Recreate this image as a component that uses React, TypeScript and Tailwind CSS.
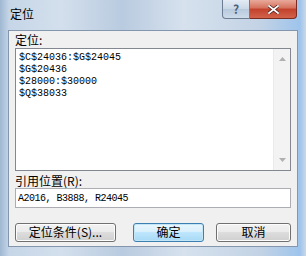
import { useState } from 'react';

const refs = ['$C$24036:$G$24045', '$G$20436', '$28000:$30000', '$Q$38033'];

function Win7Button({ label, primary }: { label: string; primary?: boolean }) {
    return (
        <button
            className={
                'w-full h-[19px] rounded-[3px] border text-[12px] leading-none text-black ' +
                (primary
                    ? 'border-[#3c7fb1] bg-[linear-gradient(#eaf6fd_0%,#d9f0fc_45%,#bee6fd_50%,#a7d9f5_100%)] shadow-[inset_0_0_0_1px_#c4e5f6]'
                    : 'border-[#707070] bg-[linear-gradient(#f2f2f2_0%,#ebebeb_45%,#dddddd_50%,#cfcfcf_100%)] shadow-[inset_0_0_0_1px_#fcfcfc]')
            }
        >
            {label}
        </button>
    );
}

export default function App() {
    const [value, setValue] = useState('A2016, B3888, R24045');

    return (
        <div
            className="w-[306px] h-[256px] flex flex-col overflow-hidden bg-[linear-gradient(90deg,#9fb7d2_0%,#c6d6e8_3%,#d3dfec_20%,#b9cbe0_40%,#d6e1ed_60%,#c3d3e5_85%,#9ec4ec_98%,#c9d8e8_100%)]"
            style={{ fontFamily: '"Noto Sans CJK SC", "Liberation Sans", sans-serif' }}
        >
            {/* Title bar */}
            <div className="h-[30px] flex items-start justify-between">
                <div className="pl-[10px] pt-[5px] text-[12px] leading-[18px] text-black">定位</div>
                <div className="flex mr-[9px]">
                    <div className="w-[28px] h-[19px] flex items-center justify-center rounded-bl-[4px] border border-t-0 border-[#6b7c93] bg-[linear-gradient(#e3ebf4_0%,#c9d7e6_50%,#b7c9dd_51%,#cddbea_100%)] text-[12px] font-bold text-[#4d5f78]">
                        ?
                    </div>
                    <div className="w-[47px] h-[19px] flex items-center justify-center rounded-br-[4px] border border-t-0 border-l-0 border-[#7a2b22] bg-[linear-gradient(#e9a99b_0%,#d4715c_45%,#c2412c_50%,#d2624a_100%)]">
                        <svg width="11" height="9" viewBox="0 0 11 9">
                            <path d="M1 1 L10 8 M10 1 L1 8" stroke="#4a1a14" strokeWidth="3.2" strokeLinecap="square" />
                            <path d="M1 1 L10 8 M10 1 L1 8" stroke="#ffffff" strokeWidth="1.8" strokeLinecap="square" />
                        </svg>
                    </div>
                </div>
            </div>

            {/* Client area */}
            <div className="flex-1 mx-[8px] mb-[9px] border border-[#8496ad] bg-[#f0f0f0] px-[6px] flex flex-col">
                <div className="h-[17px] pt-[2px] text-[12px] leading-[14px] text-black">定位:</div>
                <div className="h-[123px] flex border border-[#828790] bg-white">
                    <div className="flex-1 pl-[3px] pt-[3px] text-[10px] leading-[12px] text-black" style={{ fontFamily: '"Liberation Mono", monospace' }}>
                        {refs.map((r) => (
                            <div key={r}>{r}</div>
                        ))}
                    </div>
                    <div className="w-[17px] flex flex-col items-center justify-between bg-[#f3f3f3] border-l border-[#eaeaea] py-[8px]">
                        <svg width="7" height="4" viewBox="0 0 7 4">
                            <path d="M0 4 L3.5 0 L7 4 Z" fill="#b0b0b0" />
                        </svg>
                        <svg width="7" height="4" viewBox="0 0 7 4">
                            <path d="M0 0 L3.5 4 L7 0 Z" fill="#b0b0b0" />
                        </svg>
                    </div>
                </div>
                <div className="h-[17px] pt-[3px] text-[12px] leading-[14px] text-black">引用位置(R):</div>
                <input
                    value={value}
                    onChange={(e) => setValue(e.target.value)}
                    className="h-[20px] border border-[#abadb3] bg-white px-[2px] text-[10px] tracking-[-0.5px] text-black outline-none"
                    style={{ fontFamily: '"Liberation Mono", monospace' }}
                />
                <div className="mt-[10px] flex">
                    <div className="w-[101px]"><Win7Button label="定位条件(S)..." /></div>
                    <div className="w-[71px] ml-[17px]"><Win7Button label="确定" primary /></div>
                    <div className="w-[75px] ml-[12px]"><Win7Button label="取消" /></div>
                </div>
            </div>
        </div>
    );
}
